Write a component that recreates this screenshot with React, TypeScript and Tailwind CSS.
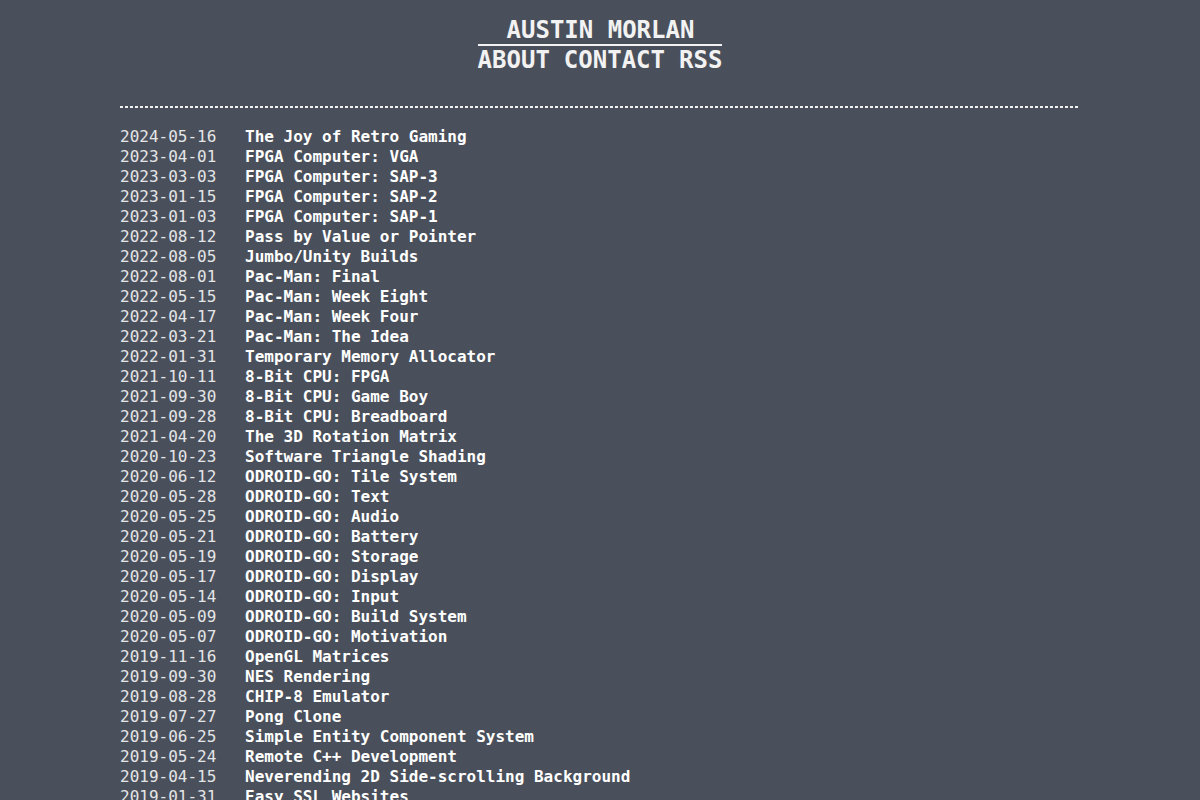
const posts: [string, string][] = [
  ['2024-05-16', 'The Joy of Retro Gaming'],
  ['2023-04-01', 'FPGA Computer: VGA'],
  ['2023-03-03', 'FPGA Computer: SAP-3'],
  ['2023-01-15', 'FPGA Computer: SAP-2'],
  ['2023-01-03', 'FPGA Computer: SAP-1'],
  ['2022-08-12', 'Pass by Value or Pointer'],
  ['2022-08-05', 'Jumbo/Unity Builds'],
  ['2022-08-01', 'Pac-Man: Final'],
  ['2022-05-15', 'Pac-Man: Week Eight'],
  ['2022-04-17', 'Pac-Man: Week Four'],
  ['2022-03-21', 'Pac-Man: The Idea'],
  ['2022-01-31', 'Temporary Memory Allocator'],
  ['2021-10-11', '8-Bit CPU: FPGA'],
  ['2021-09-30', '8-Bit CPU: Game Boy'],
  ['2021-09-28', '8-Bit CPU: Breadboard'],
  ['2021-04-20', 'The 3D Rotation Matrix'],
  ['2020-10-23', 'Software Triangle Shading'],
  ['2020-06-12', 'ODROID-GO: Tile System'],
  ['2020-05-28', 'ODROID-GO: Text'],
  ['2020-05-25', 'ODROID-GO: Audio'],
  ['2020-05-21', 'ODROID-GO: Battery'],
  ['2020-05-19', 'ODROID-GO: Storage'],
  ['2020-05-17', 'ODROID-GO: Display'],
  ['2020-05-14', 'ODROID-GO: Input'],
  ['2020-05-09', 'ODROID-GO: Build System'],
  ['2020-05-07', 'ODROID-GO: Motivation'],
  ['2019-11-16', 'OpenGL Matrices'],
  ['2019-09-30', 'NES Rendering'],
  ['2019-08-28', 'CHIP-8 Emulator'],
  ['2019-07-27', 'Pong Clone'],
  ['2019-06-25', 'Simple Entity Component System'],
  ['2019-05-24', 'Remote C++ Development'],
  ['2019-04-15', 'Neverending 2D Side-scrolling Background'],
  ['2019-01-31', 'Easy SSL Websites'],
]

export default function App() {
  return (
    <div className="min-h-screen bg-[#4a505b] text-[#f2f2f2] font-['DejaVu_Sans_Mono',monospace]">
      {/* Header: name with rule underneath, then nav links */}
      <header className="flex justify-center pt-[16px]">
        <div className="flex flex-col items-stretch text-[24px] leading-[28px] font-bold">
          <a href="#" className="text-center border-b-2 border-[#f2f2f2] pl-[1px]">
            AUSTIN MORLAN
          </a>
          <nav className="flex gap-[14px]">
            <a href="#">ABOUT</a>
            <a href="#">CONTACT</a>
            <a href="#">RSS</a>
          </nav>
        </div>
      </header>

      <main className="mx-auto w-[960px] pt-[32px]">
        {/* dotted separator */}
        <div className="h-[2px] bg-[repeating-linear-gradient(to_right,#f2f2f2_0px,#f2f2f2_3px,transparent_3px,transparent_5px)]" />

        <ul className="pt-[19px] text-[16px] leading-[20px]">
          {posts.map(([date, title]) => (
            <li key={date} className="flex">
              <span className="w-[125px] shrink-0 text-[#e4e5e7]">{date}</span>
              <a href="#" className="font-bold text-white">
                {title}
              </a>
            </li>
          ))}
        </ul>
      </main>
    </div>
  )
}
